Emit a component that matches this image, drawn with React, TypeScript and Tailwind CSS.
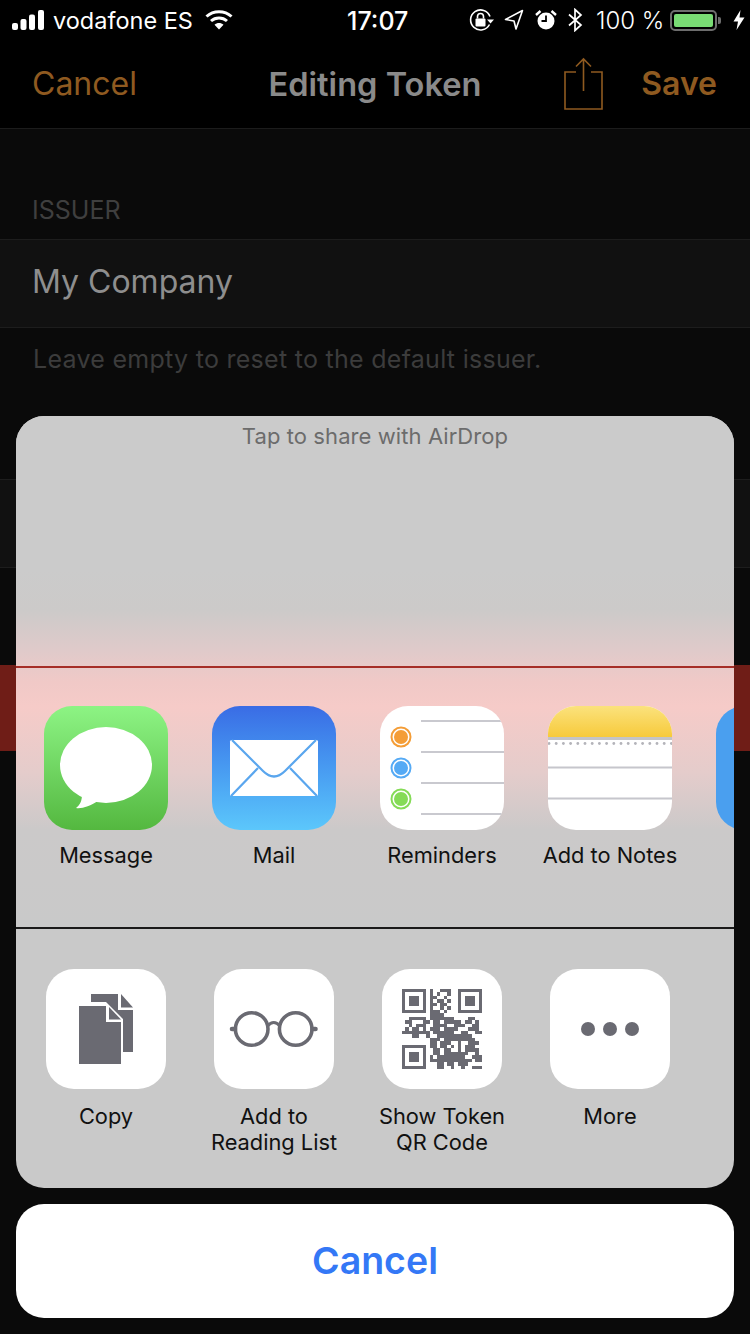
import React from 'react';

const QR_ROWS = [
  '11111110100111001111111',
  '10000010101001001000001',
  '10111010110010001011101',
  '10111010101101001011101',
  '10111010110110001011101',
  '10000010100101001000001',
  '11111110111010001111111',
  '00000000111100000000000',
  '00111110111111100001100',
  '01100011011011111011010',
  '00101110011110011100110',
  '01011010111011110001110',
  '11111111011111100110011',
  '00011001001111111111000',
  '00000000111011111111100',
  '00000000110111001001110',
  '11111110110110101011100',
  '10000010011011001011110',
  '10111010011011111110010',
  '10111010101111111100111',
  '10111010111111111111011',
  '10000010001101101110000',
  '11111110001100100100111',
];

const GRAY = '#6a6a72';

const StatusBar = () => (
  <div className="h-[40px] flex items-center pl-[12px] text-white text-[24px] leading-none">
    {/* signal */}
    <svg width="33" height="22" viewBox="0 0 33 22" className="shrink-0">
      <rect x="0" y="14" width="6" height="7" rx="2" fill="#fff" />
      <rect x="8.5" y="10" width="6" height="11" rx="2" fill="#fff" />
      <rect x="17" y="5.5" width="6" height="15.5" rx="2" fill="#fff" />
      <rect x="26" y="1" width="6" height="20" rx="2" fill="#fff" />
    </svg>
    <span className="ml-[8px] w-[139px] shrink-0 whitespace-nowrap text-[23.5px] pt-[2px]">vodafone ES</span>
    {/* wifi */}
    <svg width="28" height="22" viewBox="0 0 28 22" className="ml-[13px] shrink-0">
      <path d="M1.5 7.5 C8.5 1 19.5 1 26.5 7.5" fill="none" stroke="#fff" strokeWidth="3" />
      <path d="M6 12 C10.5 8 17.5 8 22 12" fill="none" stroke="#fff" strokeWidth="3" />
      <path d="M9.5 15.8 C12 13.5 16 13.5 18.5 15.8 L14 20.5 Z" fill="#fff" />
    </svg>
    <span className="ml-[114px] font-medium text-[25px] w-[61px] shrink-0 pt-[2px]">17:07</span>
    {/* rotation lock */}
    <svg width="26" height="24" viewBox="0 0 26 24" className="ml-[61px] shrink-0">
      <path d="M20.5 16.5 A10 10 0 1 1 21 8.5" fill="none" stroke="#fff" strokeWidth="1.6" />
      <path d="M18 11.5 L25 11.5 L21.5 15.5 Z" fill="#fff" />
      <rect x="6.5" y="10.5" width="10" height="8" rx="1" fill="#fff" />
      <path d="M8.5 10.5 V8.5 a3 3 0 0 1 6 0 V10.5" fill="none" stroke="#fff" strokeWidth="1.6" />
    </svg>
    {/* location */}
    <svg width="20" height="22" viewBox="0 0 20 22" className="ml-[9px] shrink-0">
      <path d="M1.5 10.5 L18.5 1.5 L12 20 L10 12 Z" fill="none" stroke="#fff" strokeWidth="1.6" strokeLinejoin="round" />
    </svg>
    {/* alarm */}
    <svg width="22" height="22" viewBox="0 0 22 22" className="ml-[11px] shrink-0">
      <circle cx="11" cy="12" r="8.5" fill="#fff" />
      <path d="M11 6.5 V12 H6.5" fill="none" stroke="#000" strokeWidth="1.8" />
      <path d="M1 6 L5.5 2 M21 6 L16.5 2" stroke="#fff" strokeWidth="2.4" />
    </svg>
    {/* bluetooth */}
    <svg width="15" height="24" viewBox="0 0 15 24" className="ml-[11px] shrink-0">
      <path d="M1 6.5 L13 17 L7 22.5 V1.5 L13 7 L1 17.5" fill="none" stroke="#fff" strokeWidth="1.7" />
    </svg>
    <span className="ml-[13px] w-[66px] shrink-0 whitespace-nowrap font-light pt-[2px]">100 %</span>
    {/* battery */}
    <div className="ml-[8px] w-[47px] h-[21px] shrink-0 rounded-[5px] border-2 border-[#6d6d6d] p-[2px]">
      <div className="w-full h-full rounded-[2px] bg-[#79dc74]" />
    </div>
    <div className="ml-[1px] w-[3px] h-[7px] bg-[#6d6d6d] rounded-r-[2px] shrink-0" />
    {/* charging bolt */}
    <svg width="12" height="20" viewBox="0 0 12 20" className="ml-[12px] shrink-0">
      <path d="M7.5 0 L0.5 11.5 H5 L3.5 20 L11.5 7.5 H6.5 Z" fill="#fff" />
    </svg>
  </div>
);

const NavBar = () => (
  <div className="h-[89px] flex items-center pl-[32px] pr-[33px] border-b border-[#1c1c1c] relative">
    <span className="text-[32px] text-[#8f5a20] leading-none">Cancel</span>
    <span className="absolute left-0 right-0 text-center text-[32.6px] font-semibold text-[#8a8a8a] leading-none">Editing Token</span>
    <svg width="40" height="54" viewBox="0 0 40 54" className="ml-auto mr-[37px] mt-[0px] relative">
      <path d="M12 15 H1 V52 H38 V15 H27" fill="none" stroke="#8f5a20" strokeWidth="1.6" />
      <path d="M19.5 34 V2 M12 9.5 L19.5 2 L27 9.5" fill="none" stroke="#8f5a20" strokeWidth="1.6" />
    </svg>
    <span className="text-[32px] font-semibold text-[#8f5a20] leading-none relative">Save</span>
  </div>
);

const Background = () => (
  <div>
    <StatusBar />
    <NavBar />
    <div className="h-[110px] flex items-end pl-[32px] pb-[16px]">
      <span className="text-[25px] leading-none text-[#3f3f3f]">ISSUER</span>
    </div>
    <div className="h-[89px] flex items-center pl-[32px] pb-[4px] bg-[#111111] border-y border-[#1d1d1d]">
      <span className="text-[32px] text-[#8e8e8e] leading-none">My Company</span>
    </div>
    <div className="h-[63px] flex items-center pl-[33px]">
      <span className="text-[25px] tracking-[0.28px] text-[#3c3c3c] leading-none">Leave empty to reset to the default issuer.</span>
    </div>
    <div className="h-[89px] mt-[88px] bg-[#111111] border-y border-[#1d1d1d]" />
    <div className="h-[86px] mt-[97px] bg-[#6f1d17]" />
  </div>
);

const IconFrame = ({ size, children }: { size: number; children: React.ReactNode }) => (
  <svg width={size} height={size} viewBox={`0 0 ${size} ${size}`} className="block">
    {children}
  </svg>
);

const MessageIcon = () => (
  <div className="w-[124px] h-[124px] rounded-[28px] overflow-hidden bg-gradient-to-b from-[#8df484] to-[#54b83f]">
    <IconFrame size={124}>
      <ellipse cx="62" cy="59" rx="46" ry="38" fill="#fff" />
      <path d="M38 88 C38 95 36 99 32 102 C38 103 46 100 54 95 Z" fill="#fff" />
    </IconFrame>
  </div>
);

const MailIcon = () => (
  <div className="w-[124px] h-[124px] rounded-[28px] overflow-hidden bg-gradient-to-b from-[#3a6ce5] to-[#5cc7fb]">
    <IconFrame size={124}>
      <rect x="18" y="34" width="88" height="56" rx="1.5" fill="#fff" />
      <path d="M20 34 L51 65 Q62 76 73 65 L104 34" fill="none" stroke="#5aa6ee" strokeWidth="2.2" />
      <path d="M19 90 L46 62 M105 90 L78 62" fill="none" stroke="#5aa6ee" strokeWidth="2.2" />
    </IconFrame>
  </div>
);

const RemindersIcon = () => (
  <div className="w-[124px] h-[124px] rounded-[28px] overflow-hidden bg-white">
    <IconFrame size={124}>
      {[15, 46, 77, 108].map(y => (
        <line key={y} x1="41" y1={y} x2="124" y2={y} stroke="#c9c9cf" strokeWidth="2" />
      ))}
      {[
        { y: 31, c: '#f49d37' },
        { y: 62, c: '#55aaf5' },
        { y: 93, c: '#85db57' },
      ].map(d => (
        <g key={d.y}>
          <circle cx="21" cy={d.y} r="9.5" fill="none" stroke={d.c} strokeWidth="2" />
          <circle cx="21" cy={d.y} r="7" fill={d.c} />
        </g>
      ))}
    </IconFrame>
  </div>
);

const NotesIcon = () => (
  <div className="w-[124px] h-[124px] rounded-[28px] overflow-hidden bg-white">
    <IconFrame size={124}>
      <defs>
        <linearGradient id="notesTop" x1="0" y1="0" x2="0" y2="1">
          <stop offset="0%" stopColor="#fbe27d" />
          <stop offset="100%" stopColor="#f7ca3b" />
        </linearGradient>
      </defs>
      <rect x="0" y="0" width="124" height="31" fill="url(#notesTop)" />
      <rect x="0" y="31" width="124" height="3" fill="#c4c4c6" />
      {Array.from({ length: 18 }).map((_, i) => (
        <circle key={i} cx={1 + i * 7.2} cy="37.5" r="1.4" fill="#b4b4ba" />
      ))}
      <line x1="0" y1="61.5" x2="124" y2="61.5" stroke="#c6c6cc" strokeWidth="2" />
      <line x1="0" y1="92.5" x2="124" y2="92.5" stroke="#c6c6cc" strokeWidth="2" />
    </IconFrame>
  </div>
);

const ActionFrame = ({ children }: { children: React.ReactNode }) => (
  <div className="w-[120px] h-[120px] rounded-[28px] overflow-hidden bg-white">
    <IconFrame size={120}>{children}</IconFrame>
  </div>
);

const CopyIcon = () => (
  <ActionFrame>
    <path d="M45 25 H72 V41 H87 V83 H77 V50 L60 33 H45 Z" fill={GRAY} />
    <path d="M75 25 L87 38.5 H75 Z" fill={GRAY} />
    <path d="M33 37 H60 V53 H75 V95 H33 Z" fill={GRAY} />
    <path d="M63 38 L75 50.5 H63 Z" fill={GRAY} />
  </ActionFrame>
);

const GlassesIcon = () => (
  <ActionFrame>
    <circle cx="37.7" cy="60" r="16.3" fill="none" stroke={GRAY} strokeWidth="3.6" />
    <circle cx="81.7" cy="60" r="16.3" fill="none" stroke={GRAY} strokeWidth="3.6" />
    <path d="M53.5 57 Q59.7 50 66 57" fill="none" stroke={GRAY} strokeWidth="3.2" />
    <path d="M18 60 H21 M98.5 60 H101.5" stroke={GRAY} strokeWidth="4.6" strokeLinecap="round" />
  </ActionFrame>
);

const QrIcon = () => (
  <ActionFrame>
    <g transform="translate(20 20) scale(3.478)" shapeRendering="crispEdges">
      {QR_ROWS.map((row, y) =>
        row.split('').map((v, x) =>
          v === '1' ? <rect key={`${x}-${y}`} x={x} y={y} width="1" height="1" fill={GRAY} /> : null
        )
      )}
    </g>
  </ActionFrame>
);

const MoreIcon = () => (
  <ActionFrame>
    {[38, 60, 82].map(x => (
      <circle key={x} cx={x} cy="60" r="7" fill={GRAY} />
    ))}
  </ActionFrame>
);

const apps = [
  { label: 'Message', icon: <MessageIcon /> },
  { label: 'Mail', icon: <MailIcon /> },
  { label: 'Reminders', icon: <RemindersIcon /> },
  { label: 'Add to Notes', icon: <NotesIcon /> },
];

const actions = [
  { label: ['Copy'], icon: <CopyIcon /> },
  { label: ['Add to', 'Reading List'], icon: <GlassesIcon /> },
  { label: ['Show Token', 'QR Code'], icon: <QrIcon /> },
  { label: ['More'], icon: <MoreIcon /> },
];

const ShareSheet = () => (
  <div className="absolute left-[16px] top-[416px] w-[718px]">
    <div className="h-[772px] rounded-[28px] overflow-hidden bg-[#c9c9c9]">
      <div className="h-[511px] bg-[linear-gradient(180deg,#cbcbcb_0%,#cbcbcb_30%,#cccac9_38%,#e0caca_46%,#f0c9c7_52%,#f6cbc8_57%,#e4cccb_70%,#cbc9c9_81%,#c9c9c9_100%)]">
        <div className="h-[252px] border-b-2 border-[#a62d27] pt-[8px] text-center text-[22px] leading-[24px] text-[#6c6c6c] tracking-[0.08px]">
          Tap to share with AirDrop
        </div>
        {/* app row, the last icon runs off the sheet edge */}
        <div className="flex pl-[6px] pt-[38px] overflow-hidden">
          {apps.map(a => (
            <div key={a.label} className="w-[168px] shrink-0 flex flex-col items-center">
              {a.icon}
              <span className="mt-[12px] text-[21.8px] leading-[26px] text-[#111] whitespace-nowrap">{a.label}</span>
            </div>
          ))}
          <div className="ml-[22px] w-[124px] h-[124px] shrink-0 rounded-[28px] bg-[#4a9fef]" />
        </div>
      </div>
      <div className="h-[2px] bg-[#1a1a1a]" />
      <div className="flex pl-[6px] pt-[40px]">
        {actions.map(a => (
          <div key={a.label[0]} className="w-[168px] shrink-0 flex flex-col items-center">
            {a.icon}
            <div className="mt-[14px] text-center text-[21.8px] leading-[26px] text-[#111] whitespace-nowrap">
              {a.label.map(l => (
                <div key={l}>{l}</div>
              ))}
            </div>
          </div>
        ))}
      </div>
    </div>
    <div className="mt-[16px] h-[114px] rounded-[28px] bg-white flex items-center justify-center">
      <span className="text-[37.5px] font-semibold text-[#3478f6] leading-none">Cancel</span>
    </div>
  </div>
);

export default function App() {
  return (
    <div className="relative w-[750px] h-[1334px] overflow-hidden bg-[#0a0a0a] font-['Inter',sans-serif]">
      <div className="absolute inset-x-0 top-0 h-[129px] bg-black" />
      <div className="relative">
        <Background />
      </div>
      <ShareSheet />
    </div>
  );
}
